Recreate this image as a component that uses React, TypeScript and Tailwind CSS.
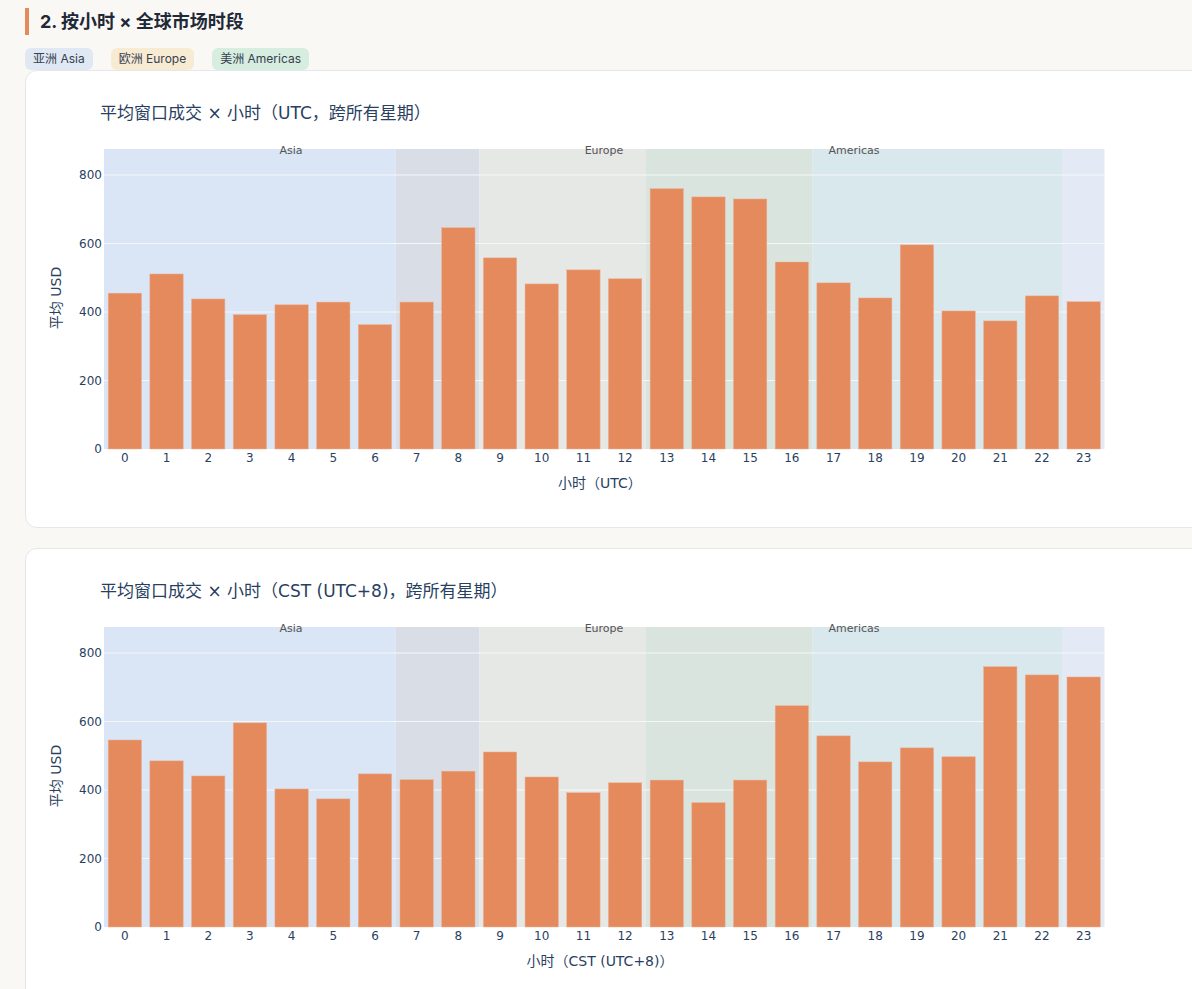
const utc = [455, 511, 438, 392, 421, 429, 363, 429, 646, 558, 482, 523, 497, 760, 736, 730, 546, 485, 441, 596, 403, 374, 447, 430];
const cst = utc.map((_, h) => utc[(h + 16) % 24]);

const plotLeft = 78;
const plotTop = 78;
const plotW = 1000.5;
const plotH = 300;
const step = plotW / 24;
const perUnit = 274 / 800;

const bands = [
  { from: 0, to: 7, fill: "#dae5f5" },
  { from: 7, to: 9, fill: "#d9dee6" },
  { from: 9, to: 13, fill: "#e6e8e6" },
  { from: 13, to: 17, fill: "#dae4df" },
  { from: 17, to: 23, fill: "#d9e8ec" },
  { from: 23, to: 24, fill: "#e4eaf5" },
];

const regionLabels = [
  { text: "Asia", x: 265 },
  { text: "Europe", x: 578 },
  { text: "Americas", x: 828 },
];

function HourChart({ title, xTitle, values }: { title: string; xTitle: string; values: number[] }) {
  const bottom = plotTop + plotH;
  return (
    <svg width="1167" height="456" className="block font-['DejaVu_Sans','Noto_Sans_CJK_SC',sans-serif]">
      <text x="74" y="48" className="fill-[#2a3f5f] text-[17px]">{title}</text>

      {bands.map((b) => (
        <rect key={b.from} x={plotLeft + b.from * step} y={plotTop} width={(b.to - b.from) * step} height={plotH} fill={b.fill} />
      ))}

      {[200, 400, 600, 800].map((v) => (
        <line key={v} x1={plotLeft} x2={plotLeft + plotW} y1={bottom - v * perUnit} y2={bottom - v * perUnit} stroke="#f4f7fa" strokeWidth="1" />
      ))}

      {regionLabels.map((r) => (
        <text key={r.text} x={r.x} y="83" textAnchor="middle" className="fill-[#555] text-[11px]">{r.text}</text>
      ))}

      {values.map((v, h) => (
        <rect
          key={h}
          x={plotLeft + h * step + step * 0.1}
          y={bottom - v * perUnit}
          width={step * 0.8}
          height={v * perUnit}
          fill="#e58a5c"
          stroke="#ecb095"
          strokeWidth="0.5"
        />
      ))}

      {[0, 200, 400, 600, 800].map((v) => (
        <text key={v} x="76" y={bottom - v * perUnit + 4} textAnchor="end" className="fill-[#2a3f5f] text-[12px]">{v}</text>
      ))}

      {values.map((_, h) => (
        <text key={h} x={plotLeft + (h + 0.5) * step} y="391" textAnchor="middle" className="fill-[#2a3f5f] text-[12px]">{h}</text>
      ))}

      <text x="574" y="417" textAnchor="middle" className="fill-[#2a3f5f] text-[14px]">{xTitle}</text>
      <text transform="translate(35 227) rotate(-90)" textAnchor="middle" className="fill-[#2a3f5f] text-[14px]">平均 USD</text>
    </svg>
  );
}

function App() {
  return (
    <div className="h-[989px] overflow-hidden bg-[#faf8f5] pl-[25px] pt-[8px] font-['Inter','Noto_Sans_CJK_SC',sans-serif]">
      <div className="w-[1200px]">
        <h2 className="border-l-4 border-[#e58a5c] pl-[11px] text-[18px] leading-[27px] font-bold text-[#1f2937]">
          2. 按小时 × 全球市场时段
        </h2>
        <div className="mt-[13px] flex gap-[18px]">
          <span className="rounded-md bg-[#dfe8f3] px-2 text-xs leading-[22px] text-[#374151]">亚洲 Asia</span>
          <span className="rounded-md bg-[#f8ebd3] px-2 text-xs leading-[22px] text-[#374151]">欧洲 Europe</span>
          <span className="rounded-md bg-[#d6eddf] px-2 text-xs leading-[22px] text-[#374151]">美洲 Americas</span>
        </div>
        <div className="mb-5 h-[458px] rounded-xl border border-[#e5e7eb] bg-white">
          <HourChart title="平均窗口成交 × 小时（UTC，跨所有星期）" xTitle="小时（UTC）" values={utc} />
        </div>
        <div className="h-[458px] rounded-xl border border-[#e5e7eb] bg-white">
          <HourChart title="平均窗口成交 × 小时（CST (UTC+8)，跨所有星期）" xTitle="小时（CST (UTC+8)）" values={cst} />
        </div>
      </div>
    </div>
  );
}

export default App;
